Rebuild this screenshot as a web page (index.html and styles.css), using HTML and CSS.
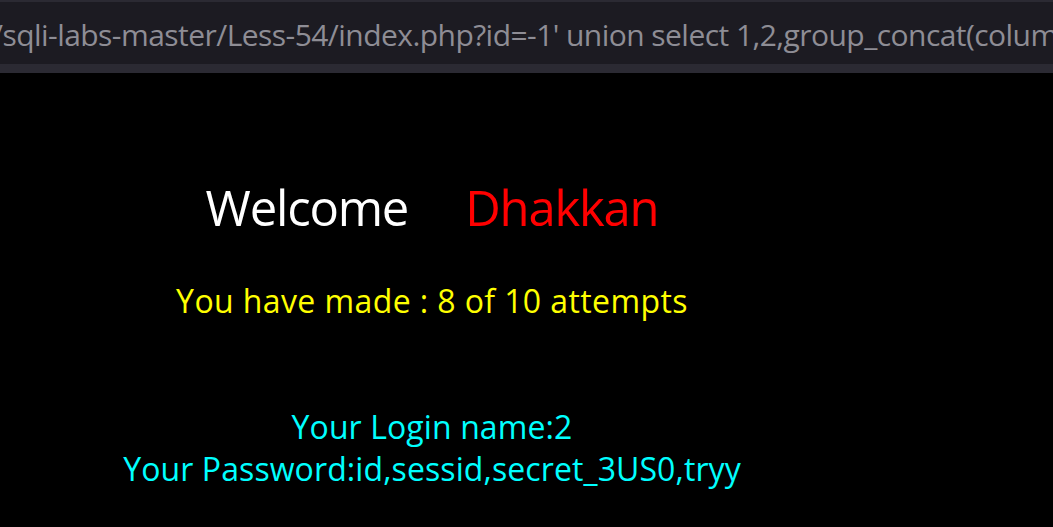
FILE: index.html
```html
<!DOCTYPE html>
<html lang="en">
<head>
    <meta charset="UTF-8">
    <title>Less-54</title>
    <link rel="stylesheet" href="styles.css">
</head>
<body>

<div class="urlbar">
    <div class="url">/sqli-labs-master/Less-54/index.php?id=-1' union select 1,2,group_concat(column_name) from information_schema.columns where table_name='3us0'--+</div>
</div>

<div class="page">
    <div class="welcome">
        <span class="welcome-text">Welcome</span>
        <span class="user">Dhakkan</span>
    </div>
    <div class="attempts">You have made : 8 of 10 attempts</div>
    <div class="result">
        <div>Your Login name:2</div>
        <div>Your Password:id,sessid,secret_3US0,tryy</div>
    </div>
</div>

</body>
</html>
```

FILE: styles.css
```css
body {
    margin: 0;
    padding: 0;
    background: #000;
    font-family: "Open Sans", "Noto Sans", sans-serif;
    overflow: hidden;
}
.urlbar {
    height: 62px;
    background: #1c1b22;
    border-top: 2px solid #2b2a33;
    border-bottom: 9px solid #2b2a33;
    overflow: hidden;
}
.url {
    white-space: nowrap;
    color: #8e8d95;
    font-size: 30px;
    line-height: 66px;
    margin-left: -8px;
    letter-spacing: -0.55px;
}
.page {
    width: 864px;
    text-align: center;
}
.welcome {
    display: flex;
    justify-content: center;
    gap: 57px;
    margin-top: 104px;
    font-size: 49px;
    line-height: 60px;
    letter-spacing: -1.2px;
}
.welcome-text {
    color: #fff;
}
.user {
    color: #ff0000;
}
.attempts {
    margin-top: 44px;
    color: #ffff00;
    font-size: 32px;
    line-height: 40px;
    letter-spacing: 0.4px;
}
.result {
    margin-top: 85px;
    color: #00ffff;
    font-size: 32px;
    line-height: 42px;
    letter-spacing: 0.1px;
}
```
